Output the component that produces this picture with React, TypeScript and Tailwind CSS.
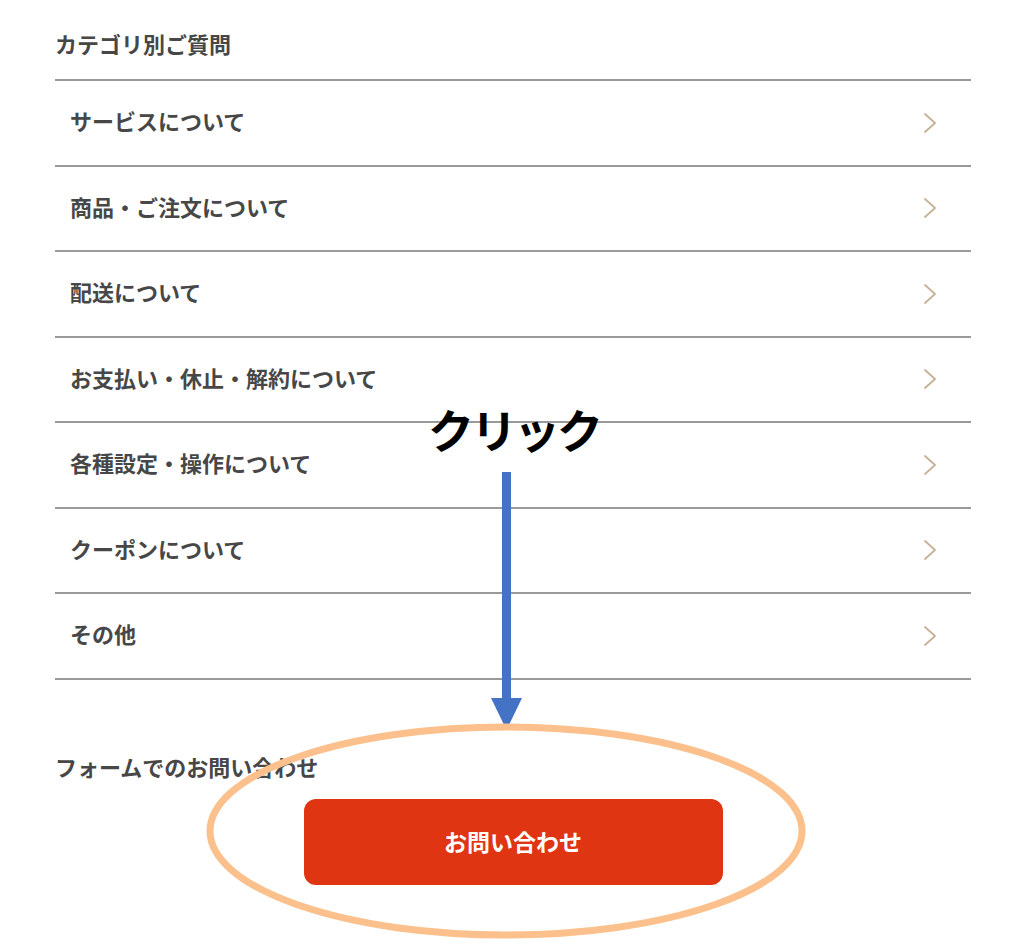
const categories = [
  'サービスについて',
  '商品・ご注文について',
  '配送について',
  'お支払い・休止・解約について',
  '各種設定・操作について',
  'クーポンについて',
  'その他',
];

const font = { fontFamily: '"Noto Sans CJK JP", "Noto Sans", sans-serif' };

function Chevron() {
  return (
    <svg width="14" height="22" viewBox="0 0 14 22" fill="none" className="shrink-0">
      <path d="M2 2 L12 11 L2 20" stroke="#c6b195" strokeWidth="1.8" strokeLinecap="round" strokeLinejoin="round" />
    </svg>
  );
}

export default function App() {
  return (
    <div className="relative w-[1024px] h-[948px] bg-white overflow-hidden text-[#474747]" style={font}>
      <div className="ml-[55px] w-[916px]">
        {/* Category FAQ */}
        <h2 className="h-[79px] pt-[29px] text-[22px] leading-[28px] font-bold">カテゴリ別ご質問</h2>
        <ul className="border-t-2 border-[#9a9a9a]">
          {categories.map((c) => (
            <li
              key={c}
              className="h-[85.5px] border-b-2 border-[#9a9a9a] flex items-center justify-between pl-[15px] pr-[34px]"
            >
              <span className="text-[22px] font-bold leading-none pb-[5px]">{c}</span>
              <Chevron />
            </li>
          ))}
        </ul>

        {/* Form inquiry */}
        <h2 className="mt-[72px] text-[22px] leading-[28px] font-bold">フォームでのお問い合わせ</h2>
        <div className="flex justify-center mt-[19px]">
          <button className="w-[419px] h-[86px] rounded-[12px] bg-[#e03512] text-white text-[23px] font-bold">
            お問い合わせ
          </button>
        </div>
      </div>

      {/* annotation: click label + arrow */}
      <div className="absolute left-[428px] top-[396px] text-[46px] leading-[64px] font-bold text-black tracking-[-3px]">
        クリック
      </div>
      <svg className="absolute left-[488px] top-[472px]" width="36" height="260" viewBox="0 0 36 260">
        <rect x="14" y="0" width="9" height="228" fill="#4472c4" />
        <polygon points="3,226 34,226 18.5,258" fill="#4472c4" />
      </svg>

      {/* annotation: highlight ellipse */}
      <svg className="absolute left-[205px] top-[722px]" width="602" height="218" viewBox="0 0 602 218">
        <ellipse cx="301" cy="109" rx="296" ry="104" fill="none" stroke="#fcc08c" strokeWidth="7" />
      </svg>
    </div>
  );
}
